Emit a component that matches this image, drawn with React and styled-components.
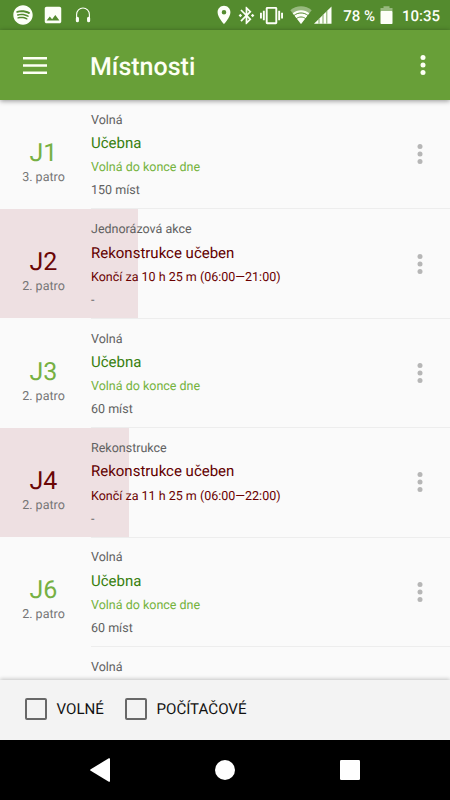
import React from "react";
import styled, { createGlobalStyle } from "styled-components";
import { FaSpotify } from "react-icons/fa";
import { MdImage, MdPlace, MdBluetoothConnected, MdVibration } from "react-icons/md";

const GlobalStyle = createGlobalStyle`
  *, *::before, *::after { box-sizing: border-box; }
  body {
    margin: 0;
    background: #000;
    font-family: Roboto, "Noto Sans", sans-serif;
    text-rendering: geometricPrecision;
  }
`;

const Screen = styled.div`
  display: flex;
  flex-direction: column;
  width: 450px;
  height: 800px;
  overflow: hidden;
  background: #fafafa;
`;

const StatusBar = styled.div`
  display: flex;
  flex: none;
  align-items: center;
  height: 30px;
  padding: 0 10px 0 12px;
  background: #548b2e;
  color: #fdfff8;
`;

const StatusIcon = styled.span`
  display: flex;
  flex: none;
  align-items: center;
  justify-content: center;
  width: ${(p) => p.$width}px;
  height: 30px;
  margin-left: ${(p) => p.$gap || 0}px;
  svg { flex: none; display: block; }
`;

const StatusSpacer = styled.span`
  flex: 1;
`;

const StatusText = styled.span`
  flex: none;
  width: ${(p) => p.$width}px;
  margin-right: ${(p) => p.$after || 0}px;
  padding-top: 1px;
  font-size: 15px;
  font-weight: 500;
  line-height: 30px;
  text-align: right;
  white-space: nowrap;
`;

const AppBar = styled.header`
  display: flex;
  flex: none;
  align-items: center;
  height: 70px;
  padding: 0 24.5px 0 23px;
  background: #689f38;
  color: #fdfff4;
  box-shadow: 0 1px 5px rgba(0, 0, 0, 0.42);
  z-index: 1;
`;

const Title = styled.h1`
  flex: 1;
  margin: 6px 0 0 43px;
  font-size: 25px;
  font-weight: 500;
  line-height: 30px;
`;

const IconButton = styled.button`
  display: flex;
  flex: none;
  padding: 0;
  border: 0;
  background: none;
  color: inherit;
  svg { display: block; }
`;

const RoomList = styled.main`
  flex: 1;
  min-height: 0;
  overflow: hidden;
`;

const tones = {
  free: { code: "#76b043", title: "#38800f", status: "#74b23c" },
  busy: { code: "#6a0606", title: "#620000", status: "#6a0000" },
};

const RoomRow = styled.article`
  display: flex;
  height: 109.375px;
  background: linear-gradient(#eee0e2, #eee0e2) 0 0 / ${(p) => p.$progress}px calc(100% - 1px) no-repeat;
`;

const RoomSide = styled.div`
  flex: none;
  width: 87px;
  padding-top: 38.8px;
  text-align: center;
`;

const RoomCode = styled.div`
  font-size: 25px;
  line-height: 30px;
  color: ${(p) => tones[p.$tone].code};
`;

const Floor = styled.div`
  font-size: 12.5px;
  line-height: 18.4px;
  color: #757575;
`;

const RoomBody = styled.div`
  display: flex;
  flex: 1;
  margin-left: 4px;
  border-bottom: 1px solid #ededed;
`;

const RoomText = styled.div`
  flex: 1;
  padding-top: 9.8px;
  white-space: nowrap;
`;

const Line = styled.div`
  font-size: 12.5px;
  line-height: 22.4px;
  color: #606060;
`;

const RoomTitle = styled.div`
  font-size: 15px;
  line-height: 23.2px;
  color: ${(p) => tones[p.$tone].title};
`;

const RoomStatus = styled.div`
  font-size: 12.5px;
  line-height: 26px;
  color: ${(p) => tones[p.$tone].status};
`;

const Seats = styled(Line)`
  line-height: 19.6px;
`;

const RowMenu = styled(IconButton)`
  align-self: center;
  margin-right: 27px;
  color: #b6b6b6;
`;

const FilterBar = styled.footer`
  display: flex;
  flex: none;
  align-items: center;
  height: 60px;
  padding: 0 25px;
  background: #f3f3f3;
  box-shadow: 0 -1px 4px rgba(0, 0, 0, 0.22);
  z-index: 1;
`;

const Filter = styled.label`
  display: flex;
  align-items: center;
  width: 100px;
  padding-bottom: 2px;
  font-size: 15.1px;
  line-height: 22px;
  color: #111;
  white-space: nowrap;
`;

const CheckBox = styled.span`
  flex: none;
  width: 22px;
  height: 22px;
  margin-right: 9.5px;
  border: 2px solid #686868;
  border-radius: 2px;
`;

const NavBar = styled.nav`
  display: flex;
  flex: none;
  align-items: center;
  justify-content: space-between;
  height: 60px;
  padding: 0 90px;
  background: #000;
  color: #fff;
`;

const Dots = () => (
  <svg width="6" height="20" viewBox="0 0 6 20" fill="currentColor">
    <circle cx="3" cy="2.5" r="2.5" />
    <circle cx="3" cy="10" r="2.5" />
    <circle cx="3" cy="17.5" r="2.5" />
  </svg>
);

const Headphones = () => (
  <svg width="16" height="16" viewBox="0 0 16 16" fill="none" stroke="currentColor">
    <path d="M1.6 11V7.4a6.4 6.4 0 0 1 12.8 0V11" strokeWidth="1.1" />
    <path d="M2.400 11.300v2.500M13.600 11.300v2.500" strokeWidth="3.1" strokeLinecap="round" />
  </svg>
);

const Wifi = () => (
  <svg width="22" height="18" viewBox="0 0 22 18" fill="currentColor">
    <path opacity=".4" d="M11 18 .3 4.2C3.2 1.6 7 .3 11 .3s7.800 1.300 10.700 3.900Z" />
    <path d="M11 18 2.700 7.300C5 5.300 7.900 4.200 11 4.200s6 1.100 8.300 3.100Z" />
    <path d="M3.900 9.600c4-3.500 10.200-3.500 14.200 0M6.300 12.700c2.700-2.300 6.700-2.300 9.400 0" fill="none" stroke="#548b2e" strokeWidth="1" />
  </svg>
);

const Signal = () => (
  <svg width="18" height="18" viewBox="0 0 18 18" fill="currentColor">
    <path d="M0 17.700 17.500.4v17.300Z" />
    <path d="M5 12.500v5.200M9 8.500v9.200M12.800 4.900v12.800" stroke="#7aa65c" strokeWidth="1" />
  </svg>
);

const Battery = () => (
  <svg width="13" height="18" viewBox="0 0 13 18" fill="currentColor">
    <path opacity=".4" d="M.5 2h3V.2h6V2h3v3H.5Z" />
    <rect x=".5" y="5" width="12" height="13" rx=".7" />
  </svg>
);

const rooms = [
  { code: "J1", floor: "3. patro", tone: "free", kind: "Volná", title: "Učebna", status: "Volná do konce dne", seats: "150 míst", progress: 0 },
  { code: "J2", floor: "2. patro", tone: "busy", kind: "Jednorázová akce", title: "Rekonstrukce učeben", status: "Končí za 10 h 25 m (06:00—21:00)", seats: "-", progress: 138 },
  { code: "J3", floor: "2. patro", tone: "free", kind: "Volná", title: "Učebna", status: "Volná do konce dne", seats: "60 míst", progress: 0 },
  { code: "J4", floor: "2. patro", tone: "busy", kind: "Rekonstrukce", title: "Rekonstrukce učeben", status: "Končí za 11 h 25 m (06:00—22:00)", seats: "-", progress: 129 },
  { code: "J6", floor: "2. patro", tone: "free", kind: "Volná", title: "Učebna", status: "Volná do konce dne", seats: "60 míst", progress: 0 },
];

const Room = ({ room }) => (
  <RoomRow $progress={room.progress}>
    <RoomSide>
      <RoomCode $tone={room.tone}>{room.code}</RoomCode>
      <Floor>{room.floor}</Floor>
    </RoomSide>
    <RoomBody>
      <RoomText>
        <Line>{room.kind}</Line>
        <RoomTitle $tone={room.tone}>{room.title}</RoomTitle>
        <RoomStatus $tone={room.tone}>{room.status}</RoomStatus>
        <Seats>{room.seats}</Seats>
      </RoomText>
      <RowMenu aria-label="Možnosti"><Dots /></RowMenu>
    </RoomBody>
  </RoomRow>
);

export default function App() {
  return (
    <>
      <GlobalStyle />
      <Screen>
        <StatusBar>
          <StatusIcon $width={21}><FaSpotify size={20} /></StatusIcon>
          <StatusIcon $width={17} $gap={11}><MdImage size={22} /></StatusIcon>
          <StatusIcon $width={16} $gap={14}><Headphones /></StatusIcon>
          <StatusSpacer />
          <StatusIcon $width={14}><MdPlace size={22} /></StatusIcon>
          <StatusIcon $width={16} $gap={7}><MdBluetoothConnected size={21} /></StatusIcon>
          <StatusIcon $width={23} $gap={6}><MdVibration size={23} /></StatusIcon>
          <StatusIcon $width={22} $gap={7}><Wifi /></StatusIcon>
          <StatusIcon $width={18} $gap={2}><Signal /></StatusIcon>
          <StatusText $width={43} $after={1}>78 %</StatusText>
          <StatusIcon $width={13} $gap={4}><Battery /></StatusIcon>
          <StatusText $width={47}>10:35</StatusText>
        </StatusBar>
        <AppBar>
          <IconButton aria-label="Menu">
            <svg width="24" height="17" viewBox="0 0 24 17" fill="currentColor">
              <path d="M0 0h24v2.600H0zM0 7.200h24v2.600H0zM0 14.400h24V17H0z" />
            </svg>
          </IconButton>
          <Title>Místnosti</Title>
          <IconButton aria-label="Další"><Dots /></IconButton>
        </AppBar>
        <RoomList>
          {rooms.map((room) => <Room key={room.code} room={room} />)}
          <RoomRow $progress={0}>
            <RoomSide />
            <RoomBody><RoomText><Line>Volná</Line></RoomText></RoomBody>
          </RoomRow>
        </RoomList>
        <FilterBar>
          <Filter><CheckBox />VOLNÉ</Filter>
          <Filter><CheckBox />POČÍTAČOVÉ</Filter>
        </FilterBar>
        <NavBar>
          <IconButton aria-label="Zpět">
            <svg width="20" height="24" viewBox="0 0 20 24" fill="currentColor">
              <path d="M18.800.3Q20-.2 20 1v22q0 1.200-1.200.7L.7 12.800q-1.200-.8 0-1.600Z" />
            </svg>
          </IconButton>
          <IconButton aria-label="Domů">
            <svg width="20" height="20" viewBox="0 0 20 20" fill="currentColor"><circle cx="10" cy="10" r="10" /></svg>
          </IconButton>
          <IconButton aria-label="Přehled">
            <svg width="20" height="20" viewBox="0 0 20 20" fill="currentColor"><rect width="20" height="20" rx="1.300" /></svg>
          </IconButton>
        </NavBar>
      </Screen>
    </>
  );
}
